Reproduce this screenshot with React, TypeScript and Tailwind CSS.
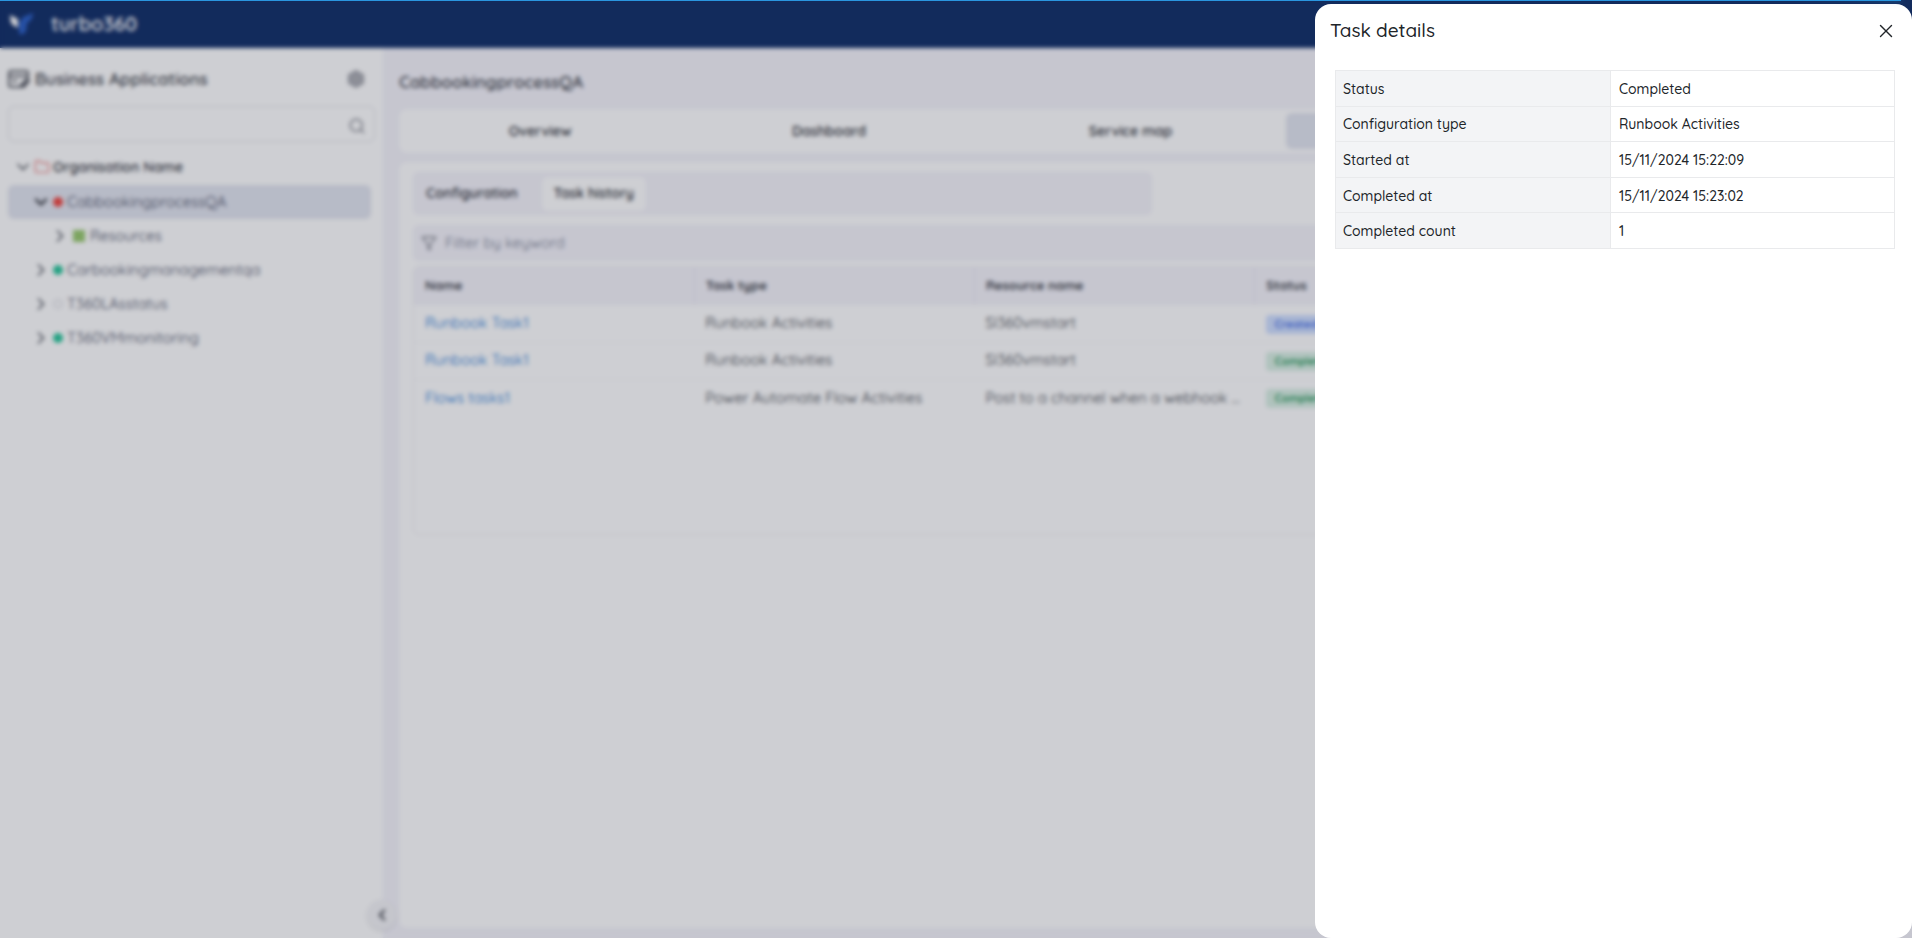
import { useState } from "react"
import { ChevronDown, ChevronLeft, ChevronRight, Folder, Funnel, Search, X } from "lucide-react"

const tree = [
  { name: "CabbookingprocessQA", open: true, dot: "bg-[#f04a44]", selected: true },
  { name: "Resources", child: true },
  { name: "Carbookingmanagementqa", dot: "bg-[#2cc79c]" },
  { name: "T360LAsstatus", dot: "border-2 border-[#e6e6ea]" },
  { name: "T360VMmonitoring", dot: "bg-[#2cc79c]" },
]

const tasks = [
  { name: "Runbook Task1", type: "Runbook Activities", resource: "Sl360vmstart", status: "Created" },
  { name: "Runbook Task1", type: "Runbook Activities", resource: "Sl360vmstart", status: "Completed" },
  {
    name: "Flows tasks1",
    type: "Power Automate Flow Activities",
    resource: "Post to a channel when a webhook ...",
    status: "Completed",
  },
]

const details = [
  ["Status", "Completed"],
  ["Configuration type", "Runbook Activities"],
  ["Started at", "15/11/2024 15:22:09"],
  ["Completed at", "15/11/2024 15:23:02"],
  ["Completed count", "1"],
]

function Logo() {
  return (
    <svg viewBox="0 0 26 22" className="w-[26px] h-[22px]" aria-hidden="true">
      <path d="M1 2 L9 6 V15 L4 12 Q2 11 1.500 8 Z" fill="#ffffff" />
      <path d="M10 10 L14 4 L24 0 Q24 7 18 10 L17 18 Q15 22 10 21 Z" fill="#2e62c8" />
    </svg>
  )
}

function AppsIcon() {
  return (
    <svg viewBox="0 0 22 20" className="w-[22px] h-5" fill="none" stroke="#5b5e66" strokeWidth="2" aria-hidden="true">
      <path d="M12 18 H3 Q1 18 1 16 V4 Q1 2 3 2 H18 Q20 2 20 4 V9" />
      <path d="M1 7 H20 M4 12 H9" />
      <path d="M13 16 L19 10 L21 12 L16 18 H13 Z" fill="#85878f" />
    </svg>
  )
}

function GearIcon() {
  return (
    <svg viewBox="0 0 18 18" className="w-[18px] h-[18px]" fill="#b4b5bb" stroke="#9c9ea5" strokeWidth="2" aria-hidden="true">
      <path d="M9 1 L16 5 V13 L9 17 L2 13 V5 Z" strokeLinejoin="round" />
      <circle cx="9" cy="9" r="3" strokeWidth="1" />
    </svg>
  )
}

function Sidebar() {
  return (
    <aside className="relative w-[383px] shrink-0 bg-white pl-2 pr-2">
      <div className="flex items-center h-8 mt-[15px] pr-[10px]">
        <AppsIcon />
        <h2 className="ml-[5px] flex-1 text-[17px] font-semibold text-[#4b4e55]">Business Applications</h2>
        <button aria-label="Settings">
          <GearIcon />
        </button>
      </div>
      <label className="flex items-center h-9 mt-[11px] pr-2 pt-[3px] rounded-md border border-[#e4e5ea]">
        <input aria-label="Search applications" className="flex-1 outline-none" />
        <Search className="size-[18px] text-[#85878f]" />
      </label>
      <div className="flex items-center h-[34px] mt-2 pl-[5px]">
        <ChevronDown className="size-5 text-[#4b4e55]" />
        <Folder className="size-4 ml-px text-[#f08a8a]" />
        <span className="ml-[3px] text-[14px] font-semibold text-[#3d4048]">Organisation Name</span>
      </div>
      <ul className="mt-px mr-1">
        {tree.map((node) => (
          <li
            key={node.name}
            className={
              "flex items-center h-[34px] rounded-md text-[15px] text-[#4d5268] " +
              (node.child ? "pl-[42px] " : "pl-[23px] ") +
              (node.selected ? "bg-[#e3e6f0]" : "")
            }
          >
            {node.open ? (
              <ChevronDown className="size-5 text-[#4b4e55]" strokeWidth={3} />
            ) : (
              <ChevronRight className="size-5 text-[#4b4f58]" />
            )}
            {node.child ? (
              <span className="size-3 ml-[3px] mr-[5px] bg-[#9aca70]" />
            ) : (
              <span className={"size-[10px] ml-[2px] mr-[4px] rounded-full " + node.dot} />
            )}
            {node.name}
          </li>
        ))}
      </ul>
      <button
        aria-label="Collapse sidebar"
        className="absolute bottom-2 -right-[14px] size-[30px] rounded-full bg-[#f4f4f7] shadow flex items-center justify-center"
      >
        <ChevronLeft className="size-[18px] text-[#4b4e55]" strokeWidth={3} />
      </button>
    </aside>
  )
}

function TaskTable() {
  return (
    <div className="mt-[5px] h-[269px] rounded-md border border-[#f1f0f4] overflow-hidden">
      <table className="w-full table-fixed border-collapse text-left text-[15px] text-[#45484f]">
        <colgroup>
          <col className="w-[19%]" />
          <col className="w-[19%]" />
          <col className="w-[19%]" />
          <col />
        </colgroup>
        <thead>
          <tr className="h-[38px] bg-[#f5f4fb] text-[13px]">
            <th className="px-[11px] border-r border-[#eae9f0] font-bold">Name</th>
            <th className="px-[11px] border-r border-[#eae9f0] font-bold">Task type</th>
            <th className="px-[11px] border-r border-[#eae9f0] font-bold">Resource name</th>
            <th className="px-[11px] font-bold">Status</th>
          </tr>
        </thead>
        <tbody>
          {tasks.map((task, i) => (
            <tr key={i} className="h-[37px] border-b border-[#f8f8fa] last:border-0">
              <td className="px-[11px]">
                <a href="#" className="text-[#2a7cd6]">{task.name}</a>
              </td>
              <td className="px-[11px] truncate">{task.type}</td>
              <td className="pl-[11px] whitespace-nowrap">{task.resource}</td>
              <td className="px-[11px]">
                <span
                  className={
                    "inline-block px-[9px] rounded text-[11px] leading-[19px] font-bold align-middle " +
                    (task.status === "Created" ? "bg-[#cfdfff] text-[#4d74e8]" : "bg-[#d9f0e4] text-[#2f9c62]")
                  }
                >
                  {task.status}
                </span>
              </td>
            </tr>
          ))}
        </tbody>
      </table>
    </div>
  )
}

function TaskDetails({ onClose }: { onClose: () => void }) {
  return (
    <div
      role="dialog"
      aria-label="Task details"
      className="fixed top-1 right-0 bottom-0 w-[597px] rounded-2xl bg-white px-[15px] text-[#212529]"
    >
      <div className="flex items-center justify-between h-[53px]">
        <h2 className="text-[19px] font-medium">Task details</h2>
        <button aria-label="Close" onClick={onClose}>
          <X className="size-[22px]" strokeWidth={1.5} />
        </button>
      </div>
      <table className="ml-[5px] mt-[13px] w-[560px] h-[179px] table-fixed border-collapse text-left text-[14px] font-medium">
        <tbody>
          {details.map(([label, value]) => (
            <tr key={label}>
              <th className="w-[275px] px-[7px] pt-[2px] border border-[#e9eaec] bg-[#f3f4f6] font-medium">{label}</th>
              <td className="px-2 pt-[2px] border border-[#e9eaec]">{value}</td>
            </tr>
          ))}
        </tbody>
      </table>
    </div>
  )
}

export default function App() {
  const [open, setOpen] = useState(true)

  return (
    <div className="h-screen flex flex-col overflow-hidden bg-[#f5f4fb] font-[Quicksand,Lato,sans-serif]">
      <header className="flex items-center h-12 shrink-0 pl-[9px] bg-[#15326b]">
        <Logo />
        <span className="ml-4 text-[20px] font-semibold text-white">turbo360</span>
      </header>

      <div className="flex flex-1 min-h-0">
        <Sidebar />
        <main className="flex flex-col flex-1 min-w-0 pl-4 pr-2 pb-[10px]">
          <h1 className="mt-[22px] text-[17px] leading-6 font-semibold text-[#4b4e55]">CabbookingprocessQA</h1>
          <nav className="grid grid-cols-[274fr_292fr_299fr_614fr] gap-[6px] mt-[15px] h-11 p-1 rounded-lg bg-white text-[14px] font-semibold text-[#34373e]">
            <button>Overview</button>
            <button>Dashboard</button>
            <button>Service map</button>
            <button aria-label="Automated tasks" className="rounded-md bg-[#e3e6f0]" />
          </nav>

          <section className="flex-1 mt-[9px] pt-[10px] px-[14px] rounded-lg bg-white">
            <div className="flex items-center h-[43px] w-1/2 px-[5px] gap-4 rounded-md bg-[#f5f4fb] text-[14px] font-semibold text-[#34373e]">
              <button className="h-[34px] px-2">Configuration</button>
              <button className="h-[34px] px-3 rounded-md bg-white">Task history</button>
            </div>
            <label className="flex items-center h-9 mt-[10px] pl-2 rounded-md bg-[#f5f4fb]">
              <Funnel className="size-4 text-[#85878f]" />
              <input
                aria-label="Filter"
                placeholder="Filter by keyword"
                className="ml-2 flex-1 outline-none text-[15px] placeholder:text-[#7e8496]"
              />
            </label>
            <TaskTable />
          </section>
        </main>
      </div>

      {open && (
        <>
          <div className="fixed inset-0 bg-[#0a0f23]/20 backdrop-blur-[2px]" />
          <TaskDetails onClose={() => setOpen(false)} />
        </>
      )}

      {/* page loading bar */}
      <div className="fixed top-0 left-0 right-[11px] h-px bg-[#2a96e0]">
        <div className="absolute right-0 -top-1 w-[100px] h-full rotate-3 shadow-[0_0_10px_#2299dd,0_0_5px_#2299dd]" />
      </div>
    </div>
  )
}
